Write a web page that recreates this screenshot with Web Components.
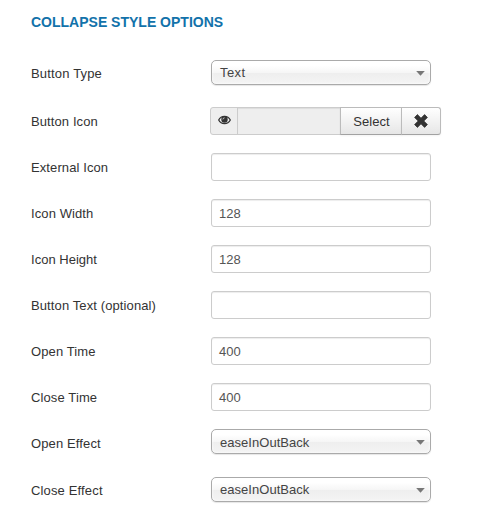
<!DOCTYPE html>
<html lang="en"><head><meta charset="utf-8"><title>Collapse Style Options</title>
<style>
html,body{margin:0;background:#fff}
body{font:13px/18px "Liberation Sans",Arial,sans-serif;color:#333}
</style></head><body>
<option-panel heading="COLLAPSE STYLE OPTIONS">
<option-row label="Button Type" kind="select" edge spacing=".17px"><drop-select style="letter-spacing:.4px">Text</drop-select></option-row>
<option-row label="Button Icon" spacing=".1px"><media-field></media-field></option-row>
<option-row label="External Icon" spacing=".1px"><text-field></text-field></option-row>
<option-row label="Icon Width" spacing=".1px"><text-field>128</text-field></option-row>
<option-row label="Icon Height" spacing=".02px"><text-field>128</text-field></option-row>
<option-row label="Button Text (optional)" spacing=".11px"><text-field></text-field></option-row>
<option-row label="Open Time" spacing=".12px"><text-field>400</text-field></option-row>
<option-row label="Close Time" spacing=".12px"><text-field>400</text-field></option-row>
<option-row label="Open Effect" kind="select" spacing=".12px"><drop-select style="--text-offset:2px;letter-spacing:.04px">easeInOutBack</drop-select></option-row>
<option-row label="Close Effect" kind="select" edge spacing=".15px"><drop-select style="letter-spacing:.04px">easeInOutBack</drop-select></option-row>
</option-panel>
<script>
const define = (name, html, setup) => customElements.define(name, class extends HTMLElement {
  connectedCallback() {
    if (this.shadowRoot) return;
    const root = this.attachShadow({ mode: 'open' });
    root.innerHTML = html;
    if (setup) setup(this, root);
  }
});

define('option-panel', `<style>
:host{display:block;padding:13px 0 0 31px;height:507px;box-sizing:border-box}
h2{margin:0 0 29px;font-size:14px;line-height:18px;font-weight:bold;color:#1272aa;white-space:nowrap}
h2 span{display:inline-block}
</style><h2><span></span></h2><slot></slot>`, (el, root) => {
  root.querySelector('span').textContent = el.getAttribute('heading');
});

define('option-row', `<style>
:host{display:flex;height:28px;margin-bottom:18px}
:host([kind=select]){height:29.4px}
label{flex:0 0 180px;padding-top:6px;white-space:nowrap}
:host([edge]) label{padding-top:5px}
</style><label></label><slot></slot>`, (el, root) => {
  const label = root.querySelector('label');
  label.textContent = el.getAttribute('label');
  label.style.letterSpacing = el.getAttribute('spacing') || '';
});

define('text-field', `<style>
:host{display:block;box-sizing:border-box;width:220px;height:28px;padding:5px 7px 3px;border:1px solid #ccc;border-radius:3px;background:#fff;color:#555;box-shadow:inset 0 1px 1px rgba(0,0,0,.075)}
</style><slot></slot>`);

define('drop-select', `<style>
:host{display:flex;box-sizing:border-box;width:220px;height:25px;padding:0 5px 0 8px;border:1px solid #aaa;border-radius:5px;align-items:center;justify-content:space-between;color:#444;line-height:19px;
background:linear-gradient(#fff 20%,#f6f6f6 50%,#eee 52%,#f4f4f4 100%);box-shadow:inset 0 0 3px #fff,0 1px 1px rgba(0,0,0,.1)}
span{padding-top:var(--text-offset,0)}
svg{width:9px;height:5px;margin-top:2px}
</style><span><slot></slot></span><svg viewBox="0 0 9 5"><path d="M.2 0h8.6L4.5 4.8z" fill="#777"/></svg>`);

define('media-field', `<style>
:host{display:flex;box-sizing:border-box;width:231px;height:28px;margin-left:-1px}
div{box-sizing:border-box;height:28px;display:flex;align-items:center;justify-content:center;border:1px solid #ccc}
.eye{width:28px;background:#eee;border-radius:3px 0 0 3px}
.value{width:104px;margin-left:-1px;background:#eee;box-shadow:inset 0 1px 1px rgba(0,0,0,.075)}
.button{width:62px;margin-left:-1px;border-color:#bbb;border-bottom-color:#a2a2a2;background:linear-gradient(#fff,#e6e6e6);box-shadow:0 1px 2px rgba(0,0,0,.05)}
.select{padding:2px 0 0 1px;letter-spacing:.08px}
.clear{width:40px;border-radius:0 3px 3px 0}
svg{display:block}
.eye svg{margin-top:-2px;margin-left:1px}
.clear svg{margin-top:-1px;margin-left:0}
</style>
<div class="eye"><svg width="13" height="10" viewBox="0 0 13 10"><path d="M.7 5C3.2.1 9.8.1 12.3 5 9.8 9.7 3.2 9.7.7 5z" fill="#eee" stroke="#333" stroke-width="1.3"/><circle cx="6.5" cy="4.5" r="3.2" fill="#333"/><path d="M4.9 4.4Q5 3 6.5 2.8" fill="none" stroke="#ddd" stroke-width=".9"/></svg></div>
<div class="value"></div><div class="button select">Select</div>
<div class="button clear"><svg width="14" height="14" viewBox="0 0 14 14"><path d="M3.4.6 7 4.2 10.6.6 13.4 3.4 9.8 7l3.6 3.6-2.8 2.8L7 9.8l-3.6 3.6L.6 10.6 4.2 7 .6 3.4z" fill="#333" stroke="#333" stroke-width=".8" stroke-linejoin="round"/></svg></div>`);
</script></body></html>
